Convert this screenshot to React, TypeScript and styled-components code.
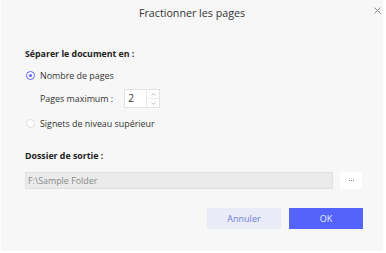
import React, { useState } from 'react';
import styled, { createGlobalStyle } from 'styled-components';

const GlobalStyle = createGlobalStyle`
  html, body {
    margin: 0;
    padding: 0;
    background: #ffffff;
  }
  body {
    font-family: 'Open Sans', 'Liberation Sans', sans-serif;
  }
`;

const Dialog = styled.div`
  width: 382px;
  height: 251px;
  margin-left: 1px;
  background: #f7f7f7;
  box-sizing: border-box;
  display: flex;
  flex-direction: column;
  color: #333;
`;

const Header = styled.div`
  position: relative;
  height: 26px;
  display: flex;
  align-items: center;
  justify-content: center;
`;

const Title = styled.div`
  font-size: 10.7px;
  color: #333;
`;

const CloseButton = styled.button`
  position: absolute;
  right: 2px;
  top: 6px;
  width: 8px;
  height: 8px;
  border: none;
  background: none;
  padding: 0;
  cursor: pointer;
  display: flex;
  align-items: center;
  justify-content: center;
`;

const Body = styled.div`
  padding: 20px 20px 0 24px;
  display: flex;
  flex-direction: column;
`;

const SectionLabel = styled.div`
  font-size: 8.8px;
  font-weight: 700;
  color: #222;
  height: 16px;
  line-height: 16px;
`;

const RadioRow = styled.label`
  display: flex;
  align-items: center;
  gap: 5px;
  font-size: 8.9px;
  height: 16px;
  cursor: pointer;
`;

const RadioDot = styled.span<{ $checked: boolean }>`
  width: 9px;
  height: 9px;
  border-radius: 50%;
  box-sizing: border-box;
  margin-left: 1px;
  border: 1px solid ${p => (p.$checked ? '#5a68f5' : '#dedede')};
  background: #fff;
  display: flex;
  align-items: center;
  justify-content: center;

  &::after {
    content: '';
    width: 3px;
    height: 3px;
    border-radius: 50%;
    background: ${p => (p.$checked ? '#5a68f5' : 'transparent')};
  }
`;

const SubRow = styled.div`
  display: flex;
  align-items: center;
  padding-left: 15px;
  font-size: 8.9px;
  gap: 11px;
`;

const Spinner = styled.div`
  display: flex;
  height: 19px;
  border: 1px solid #e2e2e2;
  background: #fff;
  box-sizing: border-box;
`;

const NumberField = styled.div`
  width: 22px;
  font-size: 10px;
  line-height: 17px;
  padding-left: 3px;
  box-sizing: border-box;
  border-right: 1px solid #e8e8e8;
`;

const Arrows = styled.div`
  width: 12px;
  display: flex;
  flex-direction: column;
`;

const Arrow = styled.div<{ $down?: boolean }>`
  flex: 1;
  display: flex;
  align-items: center;
  justify-content: center;
  border-top: ${p => (p.$down ? '1px solid #ececec' : 'none')};
`;

const FolderRow = styled.div`
  display: flex;
  align-items: center;
  gap: 7px;
`;

const PathInput = styled.div`
  width: 308px;
  height: 17px;
  box-sizing: border-box;
  background: #ebebeb;
  border: 1px solid #e0e0e0;
  color: #8a8a8a;
  font-size: 8.9px;
  line-height: 15px;
  padding-left: 2px;
`;

const BrowseButton = styled.button`
  width: 22px;
  height: 17px;
  border: none;
  background: #fff;
  padding: 0;
  display: flex;
  align-items: center;
  justify-content: center;
  gap: 1px;
`;

const Dot = styled.span`
  width: 1px;
  height: 1px;
  background: #777;
`;

const Footer = styled.div`
  display: flex;
  justify-content: flex-end;
  gap: 8px;
  padding-right: 20px;
  margin-top: 19px;
`;

const ActionButton = styled.button<{ $primary?: boolean }>`
  width: 74px;
  height: 21px;
  border: none;
  padding: 0;
  font-family: inherit;
  font-size: 9px;
  cursor: pointer;
  background: ${p => (p.$primary ? '#5464fb' : '#e9ecf6')};
  color: ${p => (p.$primary ? '#e8ebff' : '#6f7cdc')};
`;

const Spacer = styled.div<{ $h: number }>`
  height: ${p => p.$h}px;
  flex-shrink: 0;
`;

export default function App() {
  const [mode, setMode] = useState<'pages' | 'bookmarks'>('pages');

  return (
    <>
      <GlobalStyle />
      <Dialog>
        <Header>
          <Title>Fractionner les pages</Title>
          <CloseButton aria-label="Fermer">
            <svg width="7" height="7" viewBox="0 0 7 7">
              <path d="M0.5 0.5L6.5 6.5M6.5 0.5L0.5 6.5" stroke="#8a8a8a" strokeWidth="1" />
            </svg>
          </CloseButton>
        </Header>
        <Body>
          <SectionLabel>Séparer le document en :</SectionLabel>
          <Spacer $h={5} />
          <RadioRow onClick={() => setMode('pages')}>
            <RadioDot $checked={mode === 'pages'} />
            Nombre de pages
          </RadioRow>
          <Spacer $h={6} />
          <SubRow>
            <span>Pages maximum :</span>
            <Spinner>
              <NumberField>2</NumberField>
              <Arrows>
                <Arrow>
                  <svg width="5" height="3" viewBox="0 0 5 3">
                    <path d="M0.5 2.5L2.5 0.5L4.5 2.5" stroke="#aaa" fill="none" strokeWidth="0.8" />
                  </svg>
                </Arrow>
                <Arrow $down>
                  <svg width="5" height="3" viewBox="0 0 5 3">
                    <path d="M0.5 0.5L2.5 2.5L4.5 0.5" stroke="#aaa" fill="none" strokeWidth="0.8" />
                  </svg>
                </Arrow>
              </Arrows>
            </Spinner>
          </SubRow>
          <Spacer $h={7} />
          <RadioRow onClick={() => setMode('bookmarks')}>
            <RadioDot $checked={mode === 'bookmarks'} />
            Signets de niveau supérieur
          </RadioRow>
          <Spacer $h={17} />
          <SectionLabel>Dossier de sortie :</SectionLabel>
          <Spacer $h={8} />
          <FolderRow>
            <PathInput>F:\Sample Folder</PathInput>
            <BrowseButton aria-label="Parcourir">
              <Dot />
              <Dot />
              <Dot />
            </BrowseButton>
          </FolderRow>
        </Body>
        <Footer>
          <ActionButton>Annuler</ActionButton>
          <ActionButton $primary>OK</ActionButton>
        </Footer>
      </Dialog>
    </>
  );
}
